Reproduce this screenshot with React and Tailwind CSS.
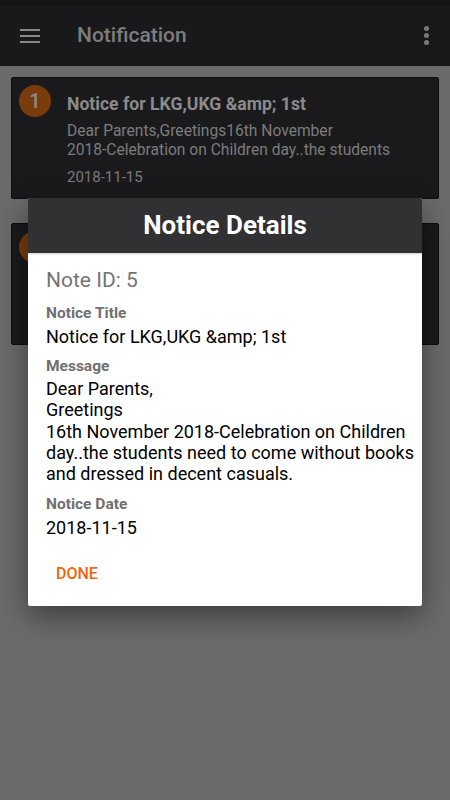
import React from 'react';

const notices = [
  {
    id: 1,
    title: 'Notice for LKG,UKG &amp; 1st',
    lines: ['Dear Parents,Greetings16th November', '2018-Celebration on Children day..the students'],
    date: '2018-11-15',
  },
  {
    id: 2,
    title: 'Notice for LKG,UKG &amp; 1st',
    lines: ['Dear Parents,Greetings16th November', '2018-Celebration on Children day..the students'],
    date: '2018-11-15',
  },
];

function NoticeCard({ notice }) {
  return (
    <div className="mx-[11px] h-[122px] rounded-[2px] border border-[#0d0d0e] bg-[#1a1a1c] pl-[7px] pt-[7px] pr-2 flex gap-4">
      <div className="w-8 h-8 shrink-0 rounded-full bg-[#7a3c0d] flex items-center justify-center text-[20px] font-medium text-[#8a8a8a] leading-none">
        {notice.id}
      </div>
      <div className="flex flex-col min-w-0">
        <div className="mt-2 text-[17.6px] font-bold text-[#8b8b8b] leading-[22px] whitespace-nowrap">{notice.title}</div>
        <div className="mt-[7px] text-[15.6px] text-[#7c7c7c] leading-[18.5px] whitespace-nowrap">
          {notice.lines.map((l) => (
            <div key={l}>{l}</div>
          ))}
        </div>
        <div className="mt-[9px] text-[15px] text-[#7a7a7a] leading-[18px]">{notice.date}</div>
      </div>
    </div>
  );
}

export default function App() {
  return (
    <div
      className="relative w-[450px] h-[800px] overflow-hidden bg-[#6b6b6b]"
      style={{ fontFamily: 'Roboto, "Noto Sans", sans-serif' }}
    >
      {/* status bar */}
      <div className="h-[5px] bg-[#141416]" />
      {/* toolbar */}
      <div className="h-[61px] bg-[#19191b] flex items-center">
        <div className="ml-5 w-5 flex flex-col gap-[4px]">
          <span className="block h-[2px] bg-[#8a8a8a]" />
          <span className="block h-[2px] bg-[#8a8a8a]" />
          <span className="block h-[2px] bg-[#8a8a8a]" />
        </div>
        <div className="ml-[37px] text-[21px] font-medium text-[#7d7d7d]">Notification</div>
        <div className="ml-auto mr-[21px] flex flex-col gap-[2px]">
          <span className="block w-[5px] h-[5px] rounded-full bg-[#7a7a7a]" />
          <span className="block w-[5px] h-[5px] rounded-full bg-[#7a7a7a]" />
          <span className="block w-[5px] h-[5px] rounded-full bg-[#7a7a7a]" />
        </div>
      </div>

      {/* list */}
      <div className="pt-[11px] flex flex-col gap-[24px]">
        {notices.map((n) => (
          <NoticeCard key={n.id} notice={n} />
        ))}
      </div>

      {/* dialog */}
      <div className="absolute left-[28px] top-[198px] w-[394px] h-[408px] bg-white rounded-[2px] shadow-[0_10px_30px_rgba(0,0,0,0.45)] overflow-hidden flex flex-col">
        <div className="h-[55px] bg-[#313033] flex items-center justify-center shadow-[0_1px_2px_rgba(0,0,0,0.2)]">
          <span className="text-[26px] font-bold text-white">Notice Details</span>
        </div>
        <div className="pl-[18px] pr-[6px] pt-[14px] flex flex-col">
          <div className="text-[21px] text-[#757575] leading-[26px]">Note ID: 5</div>
          <div className="mt-[10px] text-[15.5px] font-bold text-[#707070] leading-[20px]">Notice Title</div>
          <div className="mt-[3px] text-[18px] text-black leading-[22px]">Notice for LKG,UKG &amp;amp; 1st</div>
          <div className="mt-[8px] text-[15.5px] font-bold text-[#707070] leading-[20px]">Message</div>
          <div className="mt-[2px] text-[18px] text-black leading-[21.3px]">
            Dear Parents,
            <br />
            Greetings
            <br />
            16th November 2018-Celebration on Children day..the students need to come without books and dressed in decent casuals.
          </div>
          <div className="mt-[10px] text-[15.5px] font-bold text-[#707070] leading-[20px]">Notice Date</div>
          <div className="mt-[3px] text-[18px] text-black leading-[22px]">2018-11-15</div>
        </div>
        <div className="mt-[23px] pl-[28px]">
          <span className="text-[16px] font-medium text-[#f0640f] leading-[20px]">DONE</span>
        </div>
      </div>
    </div>
  );
}
